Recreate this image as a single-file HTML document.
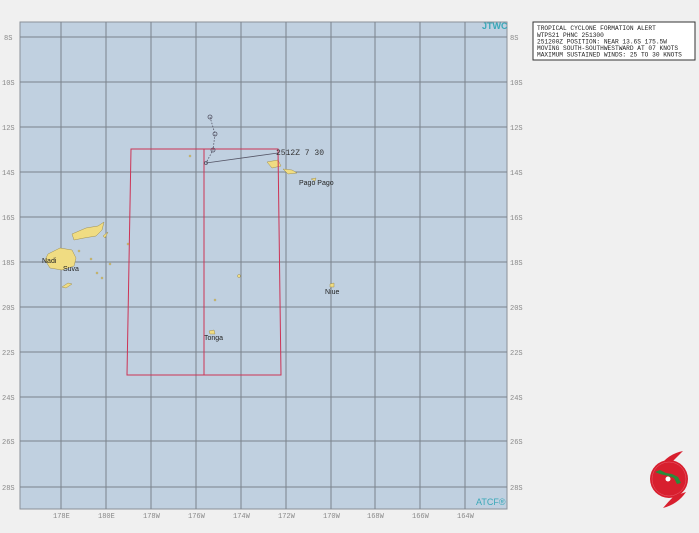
<!DOCTYPE html>
<html><head><style>
html,body{margin:0;padding:0;background:#f0f0f0;}
svg{display:block;font-family:"Liberation Mono",monospace;}
</style></head><body>
<svg width="699" height="533" viewBox="0 0 699 533">
<rect x="0" y="0" width="699" height="533" fill="#f0f0f0"/>
<rect x="20" y="22" width="487" height="487" fill="#c0d0e0" stroke="#8a9098" stroke-width="1"/>
<g stroke="#7a828c" stroke-width="1">
<line x1="61" y1="22" x2="61" y2="509"/><line x1="106" y1="22" x2="106" y2="509"/>
<line x1="151" y1="22" x2="151" y2="509"/><line x1="196" y1="22" x2="196" y2="509"/>
<line x1="241" y1="22" x2="241" y2="509"/><line x1="286" y1="22" x2="286" y2="509"/>
<line x1="331" y1="22" x2="331" y2="509"/><line x1="375" y1="22" x2="375" y2="509"/>
<line x1="420" y1="22" x2="420" y2="509"/><line x1="465" y1="22" x2="465" y2="509"/>
<line x1="20" y1="37" x2="507" y2="37"/><line x1="20" y1="82" x2="507" y2="82"/>
<line x1="20" y1="127" x2="507" y2="127"/><line x1="20" y1="172" x2="507" y2="172"/>
<line x1="20" y1="217" x2="507" y2="217"/><line x1="20" y1="262" x2="507" y2="262"/>
<line x1="20" y1="307" x2="507" y2="307"/><line x1="20" y1="352" x2="507" y2="352"/>
<line x1="20" y1="397" x2="507" y2="397"/><line x1="20" y1="441" x2="507" y2="441"/>
<line x1="20" y1="487" x2="507" y2="487"/>
</g>
<g font-size="7" fill="#888">
<text x="4" y="40">8S</text><text x="2" y="85">10S</text><text x="2" y="130">12S</text><text x="2" y="175">14S</text><text x="2" y="220">16S</text><text x="2" y="265">18S</text><text x="2" y="310">20S</text><text x="2" y="355">22S</text><text x="2" y="400">24S</text><text x="2" y="444">26S</text><text x="2" y="490">28S</text>
<text x="510" y="40">8S</text><text x="510" y="85">10S</text><text x="510" y="130">12S</text><text x="510" y="175">14S</text><text x="510" y="220">16S</text><text x="510" y="265">18S</text><text x="510" y="310">20S</text><text x="510" y="355">22S</text><text x="510" y="400">24S</text><text x="510" y="444">26S</text><text x="510" y="490">28S</text>
<text x="53" y="518">178E</text><text x="98" y="518">180E</text><text x="143" y="518">178W</text><text x="188" y="518">176W</text><text x="233" y="518">174W</text><text x="278" y="518">172W</text><text x="323" y="518">170W</text><text x="367" y="518">168W</text><text x="412" y="518">166W</text><text x="457" y="518">164W</text>
</g>
<g fill="#f0dc82" stroke="#a09050" stroke-width="0.5">
<path d="M48 254 L60 248 L72 250 L76 258 L74 266 L62 270 L50 268 L45 260Z"/>
<path d="M72 234 L86 228 L98 226 L104 222 L102 230 L96 236 L84 238 L74 240Z"/>
<path d="M103 236 L108 232 L105 238Z"/>
<path d="M62 287 L68 283 L72 284 L66 288Z"/>
<path d="M267 162 L278 160 L281 166 L272 168Z"/>
<path d="M283 169 L292 170 L297 173 L288 174Z"/>
<path d="M311 179 L316 178 L315 181Z"/>
<path d="M330 284 L334 283 L334 287 L330 287Z"/>
<path d="M209 331 L214 330 L215 334 L210 334Z"/>
<circle cx="79" cy="251" r="1"/><circle cx="91" cy="259" r="1"/><circle cx="97" cy="273" r="1"/><circle cx="102" cy="278" r="1"/><circle cx="110" cy="264" r="1"/><circle cx="128" cy="244" r="1"/><circle cx="239" cy="276" r="1.5"/><circle cx="190" cy="156" r="1"/><circle cx="215" cy="300" r="1"/>
</g>
<g font-family="Liberation Sans,sans-serif" font-size="7" fill="#222">
<text x="42" y="263">Nadi</text><text x="63" y="271">Suva</text><text x="299" y="185">Pago Pago</text><text x="325" y="294">Niue</text><text x="204" y="340">Tonga</text>
</g>
<g stroke="#cc3355" stroke-width="1" fill="none">
<path d="M131 149 L278 149 L281 375 L127 375 Z"/>
<line x1="204" y1="149" x2="204" y2="375"/>
</g>
<g stroke="#556" stroke-width="0.8" fill="none">
<path d="M210 117 L215 134 L213 150 L206 163" stroke-dasharray="1.5 1.5"/>
<line x1="206" y1="163" x2="278" y2="153"/>
<circle cx="210" cy="117" r="2"/><circle cx="215" cy="134" r="2"/><circle cx="213" cy="150" r="2"/><circle cx="206" cy="163" r="1.5"/>
</g>
<text x="276" y="155" font-size="8" fill="#333">2512Z  7  30</text>
<text x="482" y="29" font-family="Liberation Sans,sans-serif" font-size="9" font-weight="bold" fill="#3aa8b8">JTWC</text>
<text x="476" y="505" font-family="Liberation Sans,sans-serif" font-size="9" fill="#3aa8b8">ATCF®</text>
<rect x="533" y="22" width="162" height="38" fill="#fff" stroke="#333" stroke-width="1"/>
<g font-size="6.2" fill="#222">
<text x="537" y="30">TROPICAL CYCLONE FORMATION ALERT</text>
<text x="537" y="37">WTPS21 PHNC 251300</text>
<text x="537" y="43.5">251200Z POSITION: NEAR 13.6S 175.5W</text>
<text x="537" y="50">MOVING SOUTH-SOUTHWESTWARD AT 07 KNOTS</text>
<text x="537" y="56.5">MAXIMUM SUSTAINED WINDS: 25 TO 30 KNOTS</text>
</g>
<path d="M683 451 Q668 454 660 466 L672 462 Q678 456 683 451Z" fill="#d81f2e"/>
<path d="M663 508 Q678 504 686 492 L674 496 Q668 502 663 508Z" fill="#d81f2e"/>
<circle cx="669" cy="479" r="19" fill="#d81f2e"/>
<circle cx="669" cy="479" r="17" fill="none" stroke="#e86070" stroke-width="0.5"/>
<circle cx="668" cy="479" r="2.5" fill="#fff"/>
<path d="M655 472 L660 470 L666 473 L672 474 L678 477 L681 483 L677 484 L674 478 L668 476 L660 474Z" fill="#2a8a3a"/>
</svg>
</body></html>
